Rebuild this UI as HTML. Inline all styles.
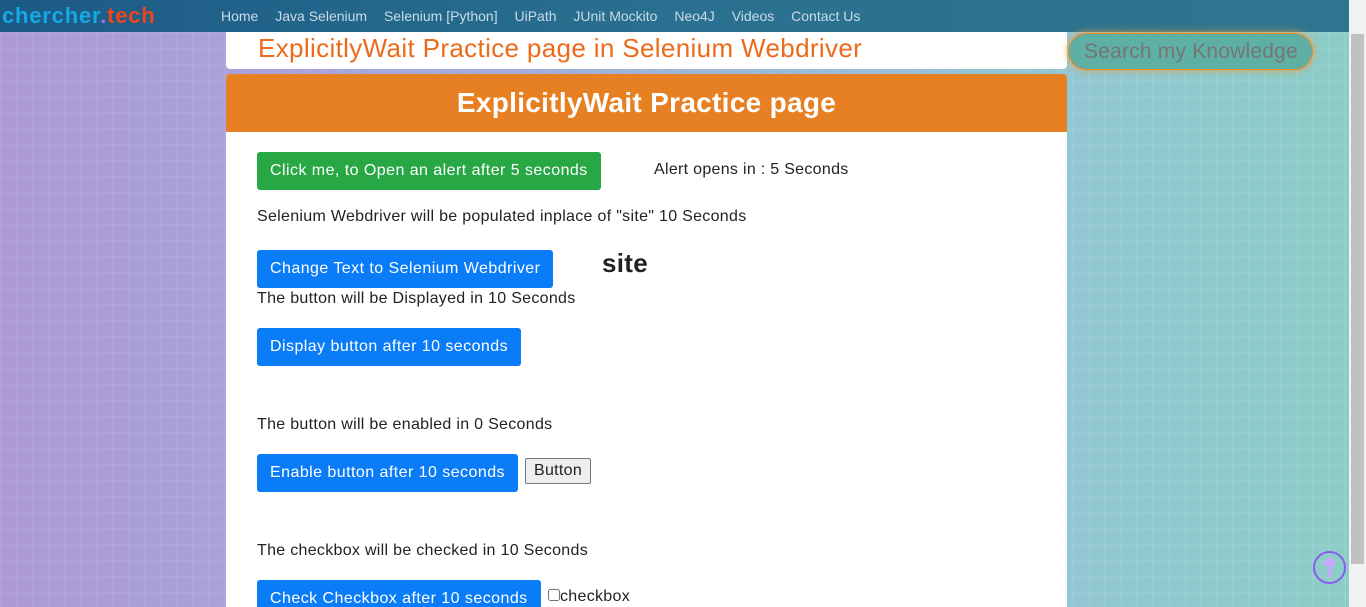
<!DOCTYPE html>
<html><head><meta charset="utf-8"><style>
*{margin:0;padding:0;box-sizing:border-box}
html,body{width:1366px;height:607px;overflow:hidden}
body{font-family:"Liberation Sans",sans-serif;background:linear-gradient(90deg,#ad9ad6 0%,#a6a8dc 30%,#93c6d6 75%,#8ccdc6 100%);position:relative}
.bg{position:absolute;inset:0;background-image:linear-gradient(rgba(255,255,255,.05) 2px,transparent 2px),linear-gradient(90deg,rgba(255,255,255,.05) 2px,transparent 2px);background-size:16px 16px}
.nav{position:absolute;left:0;top:0;width:1349px;height:32px;background:linear-gradient(90deg,#1c5a86,#2a7090 50%,#2e7690)}
.logo{position:absolute;left:2px;top:3px;font-size:22px;font-weight:bold;color:#15a9e6;letter-spacing:.8px}
.logo span{color:#f0441c}
.links{position:absolute;left:221px;top:8px;font-size:14px;color:#c8dce6}
.links a{margin-right:13px}
.sb{position:absolute;right:0;top:0;width:17px;height:607px;background:#f1f1f1}
.thumb{position:absolute;right:2px;top:34px;width:13px;height:530px;background:#c1c1c1}
.title{position:absolute;left:226px;top:32px;width:841px;height:37px;background:#fff;border-radius:0 0 4px 4px;color:#ec6a1b;font-size:26px;letter-spacing:.35px;padding-left:32px;line-height:32px}
.search{position:absolute;left:1068px;top:33px;width:245px;height:37px;border:1px solid #ea8a26;border-radius:19px;background:#5fb0a4;color:#757575;font-size:21px;letter-spacing:.2px;line-height:36px;padding-left:15px;box-shadow:0 0 8px #e8a040}
.card{position:absolute;left:226px;top:74px;width:841px;height:540px;background:#fff;border-radius:4px 4px 0 0}
.head{height:58px;background:#e78022;border-radius:4px 4px 0 0;color:#fff;font-size:28px;letter-spacing:.3px;font-weight:bold;text-align:center;line-height:58px}
.b{position:absolute;color:#fff;font-size:16px;letter-spacing:.45px;height:38px;line-height:38px;padding:0 13px;border-radius:3px;background:#0a7cf7}
.t{position:absolute;font-size:16px;letter-spacing:.3px;color:#222}
.up{position:absolute;left:1313px;top:551px;width:33px;height:33px;border-radius:50%;border:2px solid #8a5cf0}
</style></head><body>
<div class="bg"></div>
<div class="nav"><div class="logo">chercher<span style="color:#9b6ff0">.</span><span>tech</span></div>
<div class="links"><a>Home</a> <a>Java Selenium</a> <a>Selenium [Python]</a> <a>UiPath</a> <a>JUnit Mockito</a> <a>Neo4J</a> <a>Videos</a> <a>Contact Us</a></div></div>
<div class="title">ExplicitlyWait Practice page in Selenium Webdriver</div>
<div class="search">Search my Knowledge</div>
<div class="card"><div class="head">ExplicitlyWait Practice page</div>
<div class="b" style="left:31px;top:78px;background:#28a745">Click me, to Open an alert after 5 seconds</div>
<div class="t" style="left:428px;top:87px">Alert opens in : 5 Seconds</div>
<div class="t" style="left:31px;top:134px">Selenium Webdriver will be populated inplace of "site" 10 Seconds</div>
<div class="b" style="left:31px;top:176px">Change Text to Selenium Webdriver</div>
<div class="t" style="left:376px;top:174px;font-size:26px;font-weight:bold">site</div>
<div class="t" style="left:31px;top:216px">The button will be Displayed in 10 Seconds</div>
<div class="b" style="left:31px;top:254px">Display button after 10 seconds</div>
<div class="t" style="left:31px;top:342px">The button will be enabled in 0 Seconds</div>
<div class="b" style="left:31px;top:380px">Enable button after 10 seconds</div>
<div class="t" style="left:299px;top:384px;border:1px solid #777;background:#eee;padding:3px 8px;border-radius:2px">Button</div>
<div class="t" style="left:322px;top:514px"><input type="checkbox" style="width:12px;height:12px">checkbox</div>
<div class="t" style="left:31px;top:468px">The checkbox will be checked in 10 Seconds</div>
<div class="b" style="left:31px;top:506px">Check Checkbox after 10 seconds</div>
</div>
<div class="up"><svg width="29" height="29" viewBox="0 0 29 29"><path d="M14.5 24V7M9 12l5.5-6 5.5 6" stroke="#c9a8ff" stroke-width="4" fill="none"/></svg></div>
<div class="sb"><div class="thumb"></div></div>
</body></html>
